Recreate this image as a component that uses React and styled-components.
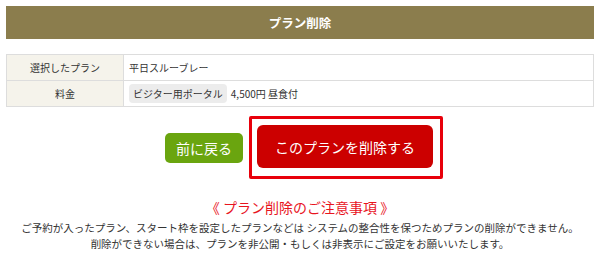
import styled, { createGlobalStyle } from "styled-components";

const Global = createGlobalStyle`
  body {
    margin: 0;
    background: #fff;
    font-family: "Noto Sans CJK JP", "Noto Sans", sans-serif;
    color: #333;
  }
`;

const Wrap = styled.div`
  padding: 6px 6px 0;
`;
const Head = styled.div`
  height: 33px;
  background-color: #8b7d4d;
  color: #fff;
  font-size: 12.5px;
  font-weight: 700;
  display: flex;
  align-items: center;
  justify-content: center;
`;
const Table = styled.table`
  width: 100%;
  margin-top: 15px;
  border-collapse: collapse;
  font-size: 10px;
`;
const Th = styled.th`
  width: 116px;
  height: 25px;
  padding: 0;
  border: 1px solid #ddd;
  background-color: #f5f3eb;
  font-weight: 400;
  text-align: center;
`;
const Td = styled.td`
  height: 25px;
  padding: 0 5px;
  border: 1px solid #ddd;
`;
const Tag = styled.span`
  display: inline-block;
  padding: 2px 4px;
  margin-right: 4px;
  border-radius: 4px;
  background-color: #ececec;
`;
const Buttons = styled.div`
  display: flex;
  align-items: center;
  justify-content: center;
  gap: 6px;
  padding-left: 8px;
  margin-top: 9px;
`;
const Button = styled.button`
  all: unset;
  display: flex;
  align-items: center;
  justify-content: center;
  width: ${(p) => (p.danger ? "176px" : "78px")};
  height: ${(p) => (p.danger ? "43px" : "30px")};
  border-radius: ${(p) => (p.danger ? "6px" : "5px")};
  background-color: ${(p) => (p.danger ? "#cc0000" : "#6aa50f")};
  color: #fff;
  font-size: 14px;
`;
const Focus = styled.div`
  border: 3px solid #e8000b;
  border-radius: 2px;
  padding: 6px 7px 8px 5px;
`;
const Notice = styled.div`
  text-align: center;
  margin-top: 19px;
`;
const NoticeTitle = styled.div`
  color: #e8141e;
  font-size: 14px;
  line-height: 18px;
`;
const NoticeText = styled.p`
  margin: 4px 0 0;
  font-size: 10.5px;
  line-height: 16px;
`;

export default function App() {
  return (
    <Wrap>
      <Global />
      <Head>プラン削除</Head>
      <Table>
        <tbody>
          <tr>
            <Th>選択したプラン</Th>
            <Td>平日スルーブレー</Td>
          </tr>
          <tr>
            <Th>料金</Th>
            <Td>
              <Tag>ビジター用ポータル</Tag>4,500円 昼食付
            </Td>
          </tr>
        </tbody>
      </Table>
      <Buttons>
        <Button type="button">前に戻る</Button>
        <Focus>
          <Button type="button" danger>
            このプランを削除する
          </Button>
        </Focus>
      </Buttons>
      <Notice>
        <NoticeTitle>《 プラン削除のご注意事項 》</NoticeTitle>
        <NoticeText>
          ご予約が入ったプラン、スタート枠を設定したプランなどは システムの整合性を保つためプランの削除ができません。
          <br />
          削除ができない場合は、プランを非公開・もしくは非表示にご設定をお願いいたします。
        </NoticeText>
      </Notice>
    </Wrap>
  );
}
